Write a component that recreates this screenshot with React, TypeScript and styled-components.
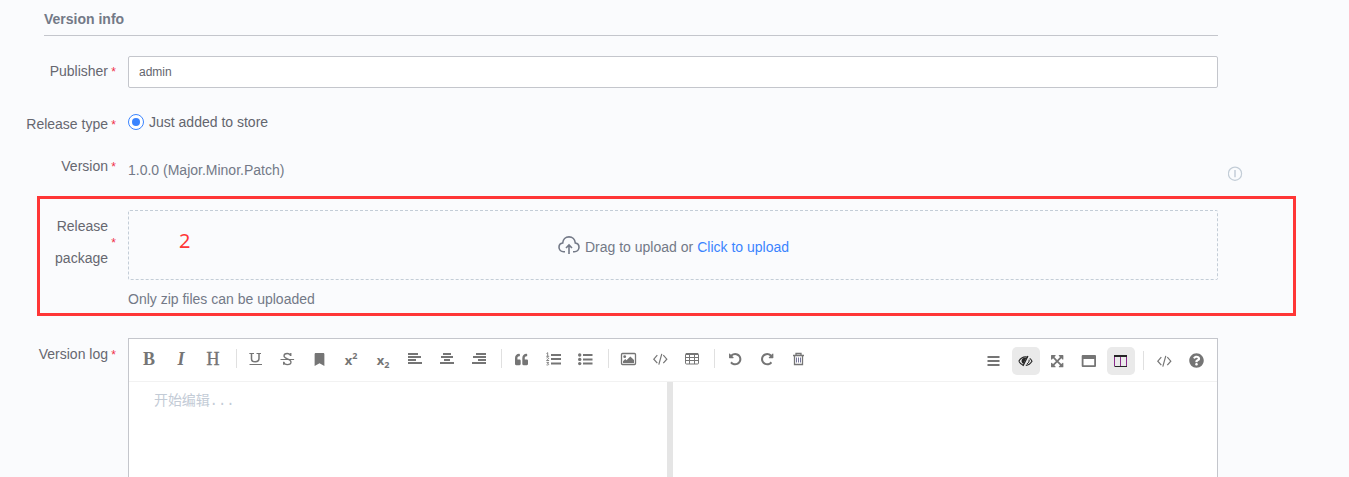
import React from 'react';
import styled, { createGlobalStyle } from 'styled-components';
import { FaBookmark, FaQuoteLeft, FaQuestionCircle } from 'react-icons/fa';

const GlobalStyle = createGlobalStyle`
  *, *::before, *::after { box-sizing: border-box; }
  body {
    margin: 0;
    background: #fafbfd;
    font-family: 'Liberation Sans', Arial, 'Noto Sans CJK SC', sans-serif;
    font-size: 14px;
    color: #737987;
    overflow: hidden;
  }
`;

const Page = styled.main`
  display: flex;
  flex-direction: column;
  width: 1349px;
  height: 477px;
  overflow: hidden;
`;

const SectionTitle = styled.h2`
  flex: none;
  width: 1174px;
  height: 36px;
  margin: 0 0 20px 44px;
  padding-top: 3px;
  border-bottom: 1px solid #c4c6cc;
  font-size: 14px;
  font-weight: 700;
  line-height: 32px;
`;

const Row = styled.div<{ $height?: number; $gap?: number }>`
  display: flex;
  flex: none;
  align-items: flex-start;
  height: ${(p) => (p.$height ? `${p.$height}px` : 'auto')};
  margin-bottom: ${(p) => p.$gap ?? 0}px;
`;

const Label = styled.label<{ $width?: number; $lineHeight?: number }>`
  position: relative;
  flex: none;
  width: ${(p) => p.$width ?? 128}px;
  padding-right: 20px;
  color: #666770;
  line-height: ${(p) => p.$lineHeight ?? 32}px;
  text-align: right;

  &::after {
    content: '*';
    position: absolute;
    top: 50%;
    right: 12px;
    height: 8px;
    color: #f0304a;
    font-size: 12px;
    line-height: 12px;
    transform: translateY(-5px);
  }
`;

const TextInput = styled.input`
  width: 1090px;
  height: 32px;
  padding: 0 10px;
  border: 1px solid #c4c6cc;
  border-radius: 2px;
  outline: none;
  background: #fff;
  color: #63656e;
  font: 12px 'Liberation Sans', Arial, sans-serif;
`;

const RadioOption = styled.div`
  display: flex;
  align-items: center;
  gap: 5px;
  height: 28px;
  color: #63656e;
`;

const RadioMark = styled.span`
  display: flex;
  align-items: center;
  justify-content: center;
  width: 16px;
  height: 16px;
  border: 1px solid #3a84ff;
  border-radius: 50%;
  background: #fff;

  &::before {
    content: '';
    width: 8px;
    height: 8px;
    border-radius: 50%;
    background: #3a84ff;
  }
`;

const VersionValue = styled.div`
  width: 1100px;
  padding-top: 4px;
  line-height: 32px;
`;

const InfoIcon = styled.svg`
  width: 15px;
  height: 15px;
  margin-top: 16px;
`;

const Highlight = styled.section`
  flex: none;
  width: 1259px;
  height: 120px;
  margin: 0 0 22px 37px;
  padding-top: 11px;
  border: 3px solid #ff3636;
`;

const Upload = styled.div`
  position: relative;
  display: flex;
  align-items: center;
  justify-content: center;
  width: 1090px;
  height: 70px;
  padding: 4px 0 0 1px;
  border: 1px dashed #c3cdd7;
  border-radius: 2px;
`;

const CloudIcon = styled.svg`
  width: 22px;
  height: 20px;
  margin: 0 5px 4px 0;
`;

const UploadLink = styled.a`
  margin-left: 4px;
  color: #3a84ff;
`;

const StepNumber = styled.span`
  position: absolute;
  top: 16px;
  left: 50px;
  color: #ff3636;
  font: 20px/27px 'Noto Sans', sans-serif;
`;

const Hint = styled.p`
  margin: 3px 0 0;
  line-height: 32px;
`;

const Editor = styled.div`
  display: flex;
  flex-direction: column;
  width: 1090px;
  height: 300px;
  border: 1px solid #c4c6cc;
  background: #fff;
`;

const Toolbar = styled.div`
  display: flex;
  flex: none;
  justify-content: space-between;
  height: 43px;
  border-bottom: 1px solid #f2f2f2;
`;

const ToolGroup = styled.div<{ $right?: boolean }>`
  display: flex;
  gap: 4px;
  padding: ${(p) => (p.$right ? '8px 7px 0 0' : '6px 0 0 6px')};
`;

const ToolButton = styled.button<{ $active?: boolean; $nudge?: number; $raise?: number }>`
  display: flex;
  align-items: center;
  justify-content: center;
  width: 28px;
  height: 28px;
  margin: ${(p) => -(p.$raise ?? 0)}px 0 0 ${(p) => p.$nudge ?? 0}px;
  padding: 0;
  border: 0;
  border-radius: 5px;
  background: ${(p) => (p.$active ? '#eaeaea' : 'transparent')};
  color: ${(p) => (p.$active ? '#252525' : '#757575')};
`;

const Divider = styled.span<{ $before: number; $after: number }>`
  width: 1px;
  height: 19px;
  margin: 4px ${(p) => p.$after}px 0 ${(p) => p.$before}px;
  background: #e0e0e0;
`;

const Glyph = styled.span<{ $bold?: boolean; $italic?: boolean }>`
  font-family: 'Liberation Serif', serif;
  font-size: 18px;
  font-weight: ${(p) => (p.$bold ? 700 : 400)};
  font-style: ${(p) => (p.$italic ? 'italic' : 'normal')};
  line-height: 20px;
  -webkit-text-stroke: ${(p) => (p.$bold ? '0' : '0.4px')} currentColor;
`;

const ScriptGlyph = styled.span<{ $sub?: boolean }>`
  display: flex;
  align-items: ${(p) => (p.$sub ? 'flex-end' : 'flex-start')};
  height: 16px;
  margin-top: 1px;
  font: 700 13px/16px 'Open Sans', sans-serif;

  small {
    font-size: 9px;
    line-height: ${(p) => (p.$sub ? '7px' : '7px')};
  }
`;

const Panes = styled.div`
  display: flex;
  flex: 1;
`;

const WritePane = styled.div`
  width: 544px;
  padding: 8px 25px;
  border-right: 6px solid #e5e5e5;
  color: #c3cbd6;
  font: 14px/22px 'Liberation Mono', 'Noto Sans CJK SC', monospace;
  letter-spacing: -0.1px;
`;

type DrawProps = { children: React.ReactNode };

const Draw = ({ children }: DrawProps) => (
  <svg width="28" height="28" viewBox="0 0 28 28" fill="none" stroke="currentColor">
    {children}
  </svg>
);

const Solid = ({ d, size = 14.4 }: { d: string; size?: number }) => (
  <svg width={size} height={size} viewBox="0 0 1792 1792" fill="currentColor">
    <path d={d} />
  </svg>
);

const UNDO =
  'M1664 896q0 156-61 298t-164 245-245 164-298 61q-172 0-327-72.5t-264-204.5q-7-10-6.5-22.5t8.5-20.5l137-138q10-9 25-9 16 2 23 12 73 95 179 147t225 52q104 0 198.5-40.5t163.5-109.5 109.5-163.5 40.5-198.5-40.5-198.5-109.5-163.5-163.5-109.5-198.5-40.5q-98 0-188 35.5t-160 101.5l137 138q31 30 14 69-17 40-59 40h-448q-26 0-45-19t-19-45v-448q0-42 40-59 39-17 69 14l130 129q107-101 244.5-156.5t284.5-55.5q156 0 298 61t245 164 164 245 61 298z';
const REDO =
  'M1664 256v448q0 26-19 45t-45 19h-448q-42 0-59-40-17-39 14-69l138-138q-148-137-349-137-104 0-198.5 40.5t-163.5 109.5-109.5 163.5-40.5 198.5 40.5 198.5 109.5 163.5 163.5 109.5 198.5 40.5q119 0 225-52t179-147q7-10 23-12 15 0 25 9l137 138q9 8 9.5 20.5t-7.5 22.5q-109 132-264 204.5t-327 72.5q-156 0-298-61t-245-164-164-245-61-298 61-298 164-245 245-164 298-61q147 0 284.5 55.5t244.5 156.5l130-129q29-31 70-14 39 17 39 59z';
const EXPAND =
  'M1411 541l-355 355 355 355 144-144q29-31 70-14 39 17 39 59v448q0 26-19 45t-45 19h-448q-42 0-59-40-17-39 14-69l144-144-355-355-355 355 144 144q31 30 14 69-17 40-59 40h-448q-26 0-45-19t-19-45v-448q0-42 40-59 39-17 69 14l144 144 355-355-355-355-144 144q-19 19-45 19-12 0-24-5-40-17-40-59v-448q0-26 19-45t45-19h448q42 0 59 40 17 39-14 69l-144 144 355 355 355-355-144-144q-31-30-14-69 17-40 59-40h448q26 0 45 19t19 45v448q0 42-39 59-13 5-25 5-26 0-45-19z';

const Underline = () => (
  <Draw>
    <path d="M8.300 8.500h4.700M15.500 8.500h4.500M8.500 19.500h12.500" />
    <path d="M10.500 8.500v5.200c0 2 1.400 3.100 3.700 3.100s3.800-1.100 3.800-3.200V8.500" strokeWidth="1.5" />
  </Draw>
);

const Strike = () => (
  <Draw>
    <path d="M7.500 14.500h13.600" />
    <path d="M17.7 10.800c-.6-1.600-1.700-2.300-3.500-2.300-2 0-3.200 1-3.200 2.600 0 3.200 7 2.500 7 6 0 1.700-1.400 2.600-3.600 2.600-2 0-3.300-1-3.700-2.800M17.800 8v3M10.700 16.800v3" strokeWidth="1.3" />
  </Draw>
);

const Align = ({ rows }: { rows: [number, number][] }) => (
  <Draw>
    {rows.map(([x, w], i) => (
      <path key={i} d={`M${x} ${9 + i * 3}h${w}`} strokeWidth="2" />
    ))}
  </Draw>
);

const OrderedList = () => (
  <Draw>
    <path d="M12 10h10M12 14h10M12 18.500h10" strokeWidth="2" />
    <path d="M7.500 8.500l1.200-.8v3.600M7.300 11.300h2.900M7.500 13c1-.8 2.200-.3 2.100.5-.1.6-1.800 1.200-2 2h2.500M7.500 17.400h2.100l-1 1.100c1.800.1 1.500 1.900-1.100 1.400" strokeWidth=".9" />
  </Draw>
);

const BulletList = () => (
  <Draw>
    <path d="M12 10h9.500M12 14.500h9.500M12 18.500h9.500" strokeWidth="2" />
    <g fill="currentColor" stroke="none">
      <circle cx="8.7" cy="10" r="1.700" />
      <circle cx="8.7" cy="14.400" r="1.700" />
      <circle cx="8.7" cy="18.600" r="1.700" />
    </g>
  </Draw>
);

const Picture = () => (
  <Draw>
    <rect x="7.500" y="8.500" width="14" height="11" rx="1" strokeWidth="1.300" />
    <g fill="currentColor" stroke="none">
      <circle cx="10.700" cy="11.700" r="1.400" />
      <path d="M9 18v-1.800l2.200-2.200 1.300 1.200 3.800-3.800 3.700 3.700V18z" />
    </g>
  </Draw>
);

const Code = () => (
  <Draw>
    <path d="M11.300 10.200L7.800 14.200l3.500 4M17.300 10.200l3.500 4-3.500 4M15.800 8.800l-3 10.800" strokeWidth="1.200" />
  </Draw>
);

const Table = () => (
  <Draw>
    <rect x="7.500" y="8.500" width="13" height="10.500" rx="1" />
    <path d="M8 9h12" strokeWidth="2" />
    <path d="M7.500 12.500h13M7.500 15.500h13M11.500 9v10M16.500 9v10" />
  </Draw>
);

const Trash = () => (
  <Draw>
    <path d="M9 10.500h11M12 10V8.500h5V10M10.500 11v8.500h8V11" strokeWidth="1.300" />
    <path d="M12.500 12.500v5M14.500 12.500v5M16.500 12.500v5" stroke="#77779b" />
  </Draw>
);

const Lines = () => (
  <Draw>
    <path d="M7.500 10h12M7.500 14h12M7.500 18h12" strokeWidth="2" />
  </Draw>
);

const EyeOff = () => (
  <Draw>
    <path d="M6.800 14.200c1.600-2.700 4-4.300 6.700-4.300 1 0 1.700.1 2.400.4M17.700 11.400c1 .7 1.700 1.600 2.300 2.800-1.500 2.500-3.500 4-6.200 4.200M6.800 14.200c1 1.800 2.300 3 4 3.800" strokeWidth="1.100" />
    <path d="M15.900 9l-5 10" strokeWidth="1.300" />
    <path d="M14.300 11l-3 6c-1.600-1-2.200-2.500-1.500-4.200.6-1.400 2.200-2.500 4.500-1.800z" fill="currentColor" stroke="none" />
    <path d="M17.100 12.600c.3 2-.5 3.500-2.200 4.200" />
  </Draw>
);

const Window = () => (
  <Draw>
    <path d="M6.700 9q0-1 1-1h12.300q1 0 1 1v10q0 1-1 1H7.700q-1 0-1-1zM8.500 12v6.300h10.700V12z" fill="currentColor" fillRule="evenodd" stroke="none" />
  </Draw>
);

const Columns = () => (
  <Draw>
    <path d="M7 9h13" strokeWidth="2" />
    <path d="M7.500 10v9M13.500 10v9M19.500 10v9" stroke="#8a2a8c" />
    <path d="M7.500 19.500h12.500" />
  </Draw>
);

export default function App() {
  return (
    <>
      <GlobalStyle />
      <Page>
        <SectionTitle>Version info</SectionTitle>

        <Row $height={32} $gap={20}>
          <Label $lineHeight={30}>Publisher</Label>
          <TextInput defaultValue="admin" />
        </Row>

        <Row $height={32} $gap={10}>
          <Label>Release type</Label>
          <RadioOption>
            <RadioMark />
            Just added to store
          </RadioOption>
        </Row>

        <Row $height={36} $gap={10}>
          <Label>Version</Label>
          <VersionValue>1.0.0 (Major.Minor.Patch)</VersionValue>
          <InfoIcon viewBox="0 0 15 15" fill="none" stroke="#c3cdd7">
            <circle cx="7" cy="7.700" r="6.600" strokeWidth="1.200" />
            <path d="M7 4v7.300" strokeWidth="1.500" />
          </InfoIcon>
        </Row>

        <Highlight>
          <Row>
            <Label $width={88}>
              Release
              <br />
              package
            </Label>
            <div>
              <Upload>
                <StepNumber>2</StepNumber>
                <CloudIcon viewBox="0 0 22 20" fill="none" stroke="#737987" strokeWidth="1.600">
                  <path d="M7 16.700H5.600C3 16.700 1 14.800 1 12.300 1 10 2.600 8.300 4.700 8 5 4.500 7.500 1.900 11 1.900s6 2.600 6.300 6.100C19.400 8.300 21 10 21 12.300c0 2.500-2 4.400-4.600 4.400H15" />
                  <path d="M11 19V10.500M8 13l3-3 3 3" />
                </CloudIcon>
                Drag to upload or <UploadLink>Click to upload</UploadLink>
              </Upload>
              <Hint>Only zip files can be uploaded</Hint>
            </div>
          </Row>
        </Highlight>

        <Row>
          <Label>Version log</Label>
          <Editor>
            <Toolbar>
              <ToolGroup>
                <ToolButton><Glyph $bold>B</Glyph></ToolButton>
                <ToolButton><Glyph $bold $italic>I</Glyph></ToolButton>
                <ToolButton><Glyph>H</Glyph></ToolButton>
                <Divider $before={5} $after={0} />
                <ToolButton><Underline /></ToolButton>
                <ToolButton><Strike /></ToolButton>
                <ToolButton><FaBookmark size={13} /></ToolButton>
                <ToolButton><ScriptGlyph>x<small>2</small></ScriptGlyph></ToolButton>
                <ToolButton><ScriptGlyph $sub>x<small>2</small></ScriptGlyph></ToolButton>
                <ToolButton><Align rows={[[7, 10], [7, 13], [7, 8], [7, 14]]} /></ToolButton>
                <ToolButton><Align rows={[[10, 8], [8, 12], [11, 6], [7, 14]]} /></ToolButton>
                <ToolButton><Align rows={[[11, 10], [8, 13], [13, 8], [7, 14]]} /></ToolButton>
                <Divider $before={4} $after={1} />
                <ToolButton><FaQuoteLeft size={13} /></ToolButton>
                <ToolButton><OrderedList /></ToolButton>
                <ToolButton><BulletList /></ToolButton>
                <Divider $before={5} $after={1} />
                <ToolButton><Picture /></ToolButton>
                <ToolButton><Code /></ToolButton>
                <ToolButton><Table /></ToolButton>
                <Divider $before={4} $after={1} />
                <ToolButton $nudge={1}><Solid d={UNDO} /></ToolButton>
                <ToolButton><Solid d={REDO} /></ToolButton>
                <ToolButton $nudge={-1}><Trash /></ToolButton>
              </ToolGroup>
              <ToolGroup $right>
                <ToolButton><Lines /></ToolButton>
                <ToolButton $active><EyeOff /></ToolButton>
                <ToolButton $nudge={-1}><Solid d={EXPAND} /></ToolButton>
                <ToolButton><Window /></ToolButton>
                <ToolButton $active><Columns /></ToolButton>
                <Divider $before={4} $after={2} />
                <ToolButton><Code /></ToolButton>
                <ToolButton $raise={1}><FaQuestionCircle size={15} /></ToolButton>
              </ToolGroup>
            </Toolbar>
            <Panes>
              <WritePane>开始编辑...</WritePane>
            </Panes>
          </Editor>
        </Row>
      </Page>
    </>
  );
}
